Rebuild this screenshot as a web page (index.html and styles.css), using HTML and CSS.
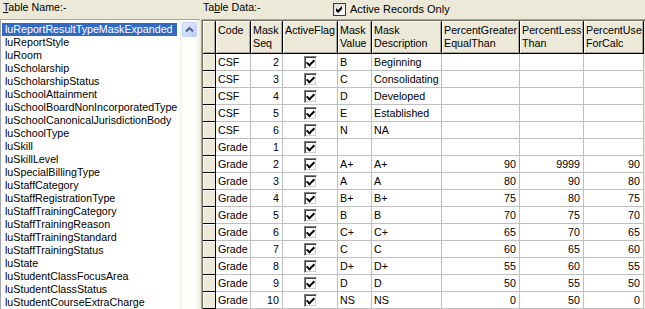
FILE: index.html
```html
<!DOCTYPE html>
<html>
<head>
<meta charset="utf-8">
<link rel="stylesheet" href="styles.css">
</head>
<body>
<div class="app">
  <section class="left">
    <div class="label"><u>T</u>able Name:-</div>
    <div class="listbox">
      <ul class="items">
        <li class="sel">luReportResultTypeMaskExpanded</li>
        <li>luReportStyle</li>
        <li>luRoom</li>
        <li>luScholarship</li>
        <li>luScholarshipStatus</li>
        <li>luSchoolAttainment</li>
        <li>luSchoolBoardNonIncorporatedType</li>
        <li>luSchoolCanonicalJurisdictionBody</li>
        <li>luSchoolType</li>
        <li>luSkill</li>
        <li>luSkillLevel</li>
        <li>luSpecialBillingType</li>
        <li>luStaffCategory</li>
        <li>luStaffRegistrationType</li>
        <li>luStaffTrainingCategory</li>
        <li>luStaffTrainingReason</li>
        <li>luStaffTrainingStandard</li>
        <li>luStaffTrainingStatus</li>
        <li>luState</li>
        <li>luStudentClassFocusArea</li>
        <li>luStudentClassStatus</li>
        <li>luStudentCourseExtraCharge</li>
      </ul>
      <div class="vscroll">
        <div class="sbtn"><svg width="13" height="13" viewBox="0 0 13 13"><path d="M3 8.5 L6.5 5 L10 8.5" fill="none" stroke="#4D6185" stroke-width="2"/></svg></div>
      </div>
    </div>
  </section>
  <section class="right">
    <div class="toolbar">
      <div class="label data-label">Ta<u>b</u>le Data:-</div>
      <div class="chk">
        <span class="xpbox"><svg width="11" height="11" viewBox="0 0 11 11"><polygon points="2,4 4,6 8,2 8,5 4,9 2,7" fill="#000"/></svg></span>
        <span>Active Records Only</span>
      </div>
    </div>
    <div class="grid">
      <div class="grid-inner">
        <table>
          <colgroup>
            <col class="c-rh"><col class="c-code"><col class="c-seq"><col class="c-act"><col class="c-val"><col class="c-desc"><col class="c-pge"><col class="c-plt"><col class="c-puc">
          </colgroup>
          <thead>
            <tr>
              <th class="rh"></th>
              <th>Code</th>
              <th>Mask<br>Seq</th>
              <th>ActiveFlag</th>
              <th>Mask<br>Value</th>
              <th>Mask<br>Description</th>
              <th>PercentGreater<br>EqualThan</th>
              <th>PercentLess<br>Than</th>
              <th>PercentUse<br>ForCalc</th>
            </tr>
          </thead>
          <tbody>
            <tr><td class="rh"></td><td>CSF</td><td class="num">2</td><td class="cb"><span class="gbox"></span></td><td>B</td><td>Beginning</td><td class="num"></td><td class="num"></td><td class="num"></td></tr>
            <tr><td class="rh"></td><td>CSF</td><td class="num">3</td><td class="cb"><span class="gbox"></span></td><td>C</td><td>Consolidating</td><td class="num"></td><td class="num"></td><td class="num"></td></tr>
            <tr><td class="rh"></td><td>CSF</td><td class="num">4</td><td class="cb"><span class="gbox"></span></td><td>D</td><td>Developed</td><td class="num"></td><td class="num"></td><td class="num"></td></tr>
            <tr><td class="rh"></td><td>CSF</td><td class="num">5</td><td class="cb"><span class="gbox"></span></td><td>E</td><td>Established</td><td class="num"></td><td class="num"></td><td class="num"></td></tr>
            <tr><td class="rh"></td><td>CSF</td><td class="num">6</td><td class="cb"><span class="gbox"></span></td><td>N</td><td>NA</td><td class="num"></td><td class="num"></td><td class="num"></td></tr>
            <tr><td class="rh"></td><td>Grade</td><td class="num">1</td><td class="cb"><span class="gbox"></span></td><td></td><td></td><td class="num"></td><td class="num"></td><td class="num"></td></tr>
            <tr><td class="rh"></td><td>Grade</td><td class="num">2</td><td class="cb"><span class="gbox"></span></td><td>A+</td><td>A+</td><td class="num">90</td><td class="num">9999</td><td class="num">90</td></tr>
            <tr><td class="rh"></td><td>Grade</td><td class="num">3</td><td class="cb"><span class="gbox"></span></td><td>A</td><td>A</td><td class="num">80</td><td class="num">90</td><td class="num">80</td></tr>
            <tr><td class="rh"></td><td>Grade</td><td class="num">4</td><td class="cb"><span class="gbox"></span></td><td>B+</td><td>B+</td><td class="num">75</td><td class="num">80</td><td class="num">75</td></tr>
            <tr><td class="rh"></td><td>Grade</td><td class="num">5</td><td class="cb"><span class="gbox"></span></td><td>B</td><td>B</td><td class="num">70</td><td class="num">75</td><td class="num">70</td></tr>
            <tr><td class="rh"></td><td>Grade</td><td class="num">6</td><td class="cb"><span class="gbox"></span></td><td>C+</td><td>C+</td><td class="num">65</td><td class="num">70</td><td class="num">65</td></tr>
            <tr><td class="rh"></td><td>Grade</td><td class="num">7</td><td class="cb"><span class="gbox"></span></td><td>C</td><td>C</td><td class="num">60</td><td class="num">65</td><td class="num">60</td></tr>
            <tr><td class="rh"></td><td>Grade</td><td class="num">8</td><td class="cb"><span class="gbox"></span></td><td>D+</td><td>D+</td><td class="num">55</td><td class="num">60</td><td class="num">55</td></tr>
            <tr><td class="rh"></td><td>Grade</td><td class="num">9</td><td class="cb"><span class="gbox"></span></td><td>D</td><td>D</td><td class="num">50</td><td class="num">55</td><td class="num">50</td></tr>
            <tr><td class="rh"></td><td>Grade</td><td class="num">10</td><td class="cb"><span class="gbox"></span></td><td>NS</td><td>NS</td><td class="num">0</td><td class="num">50</td><td class="num">0</td></tr>
          </tbody>
        </table>
      </div>
    </div>
  </section>
</div>
</body>
</html>
```

FILE: styles.css
```css
* { box-sizing: border-box; }

html, body {
  margin: 0;
  padding: 0;
  height: 100%;
  overflow: hidden;
  background: #ECE9D8;
  font-family: "Liberation Sans", Arial, sans-serif;
  font-size: 10.7px;
  color: #000;
}

.app {
  display: flex;
  height: 309px;
}

/* ---------- left panel ---------- */
.left {
  width: 200px;
  flex: none;
  display: flex;
  flex-direction: column;
}

.label {
  height: 19px;
  padding: 1px 0 0 3px;
  line-height: 13px;
  white-space: nowrap;
}

.label u { text-decoration: underline; text-underline-offset: 1px; }

.listbox {
  flex: 1;
  min-height: 0;
  display: flex;
  background: #fff;
  border-top: 1px solid #A5A5A5;
  border-left: 1px solid #A5A5A5;
  overflow: hidden;
}

.items {
  list-style: none;
  margin: 0;
  padding: 3px 0 0 1px;
  width: 179px;
  flex: none;
  overflow: hidden;
}

.items li {
  width: 178px;
  height: 13px;
  line-height: 13px;
  padding-left: 3px;
  white-space: nowrap;
}

.items li.sel {
  width: 175px;
  overflow: hidden;
  background: #316AC5;
  color: #fff;
}

.vscroll {
  width: 20px;
  flex: none;
  background: linear-gradient(to right, #F1EFE6 0, #FDFDFA 3px, #FDFDFA 15px, #EFEDE4 20px);
  padding: 2px 3px 0 2px;
}

.sbtn {
  width: 15px;
  height: 15px;
  border: 1px solid #C3D2F6;
  border-radius: 2px;
  background: linear-gradient(to bottom right, #E6EEFE, #BACDF8);
  display: flex;
  align-items: center;
  justify-content: center;
}

.sbtn svg { display: block; }

/* ---------- right panel ---------- */
.right {
  flex: 1;
  min-width: 0;
  display: flex;
  flex-direction: column;
  padding-left: 1px;
}

.toolbar {
  display: flex;
  align-items: flex-start;
  height: 19px;
  flex: none;
}

.data-label {
  width: 132px;
  padding-left: 2px;
}

.chk {
  margin-top: 3px;
  display: flex;
  align-items: center;
  gap: 4px;
  line-height: 13px;
  white-space: nowrap;
  font-size: 11px;
}

.xpbox {
  width: 13px;
  height: 13px;
  border: 1px solid #3A3A3A;
  background: linear-gradient(to bottom right, #DCDAD2, #FFFFFF);
  display: flex;
  align-items: center;
  justify-content: center;
}

.xpbox svg { display: block; }

.grid {
  flex: 1;
  min-height: 0;
  overflow: hidden;
  border-top: 1px solid #ACA899;
  border-left: 1px solid #ACA899;
}

.grid-inner {
  height: 100%;
  border-top: 1px solid #716F64;
  border-left: 1px solid #716F64;
  overflow: hidden;
}

table {
  border-collapse: separate;
  border-spacing: 0;
  table-layout: fixed;
  width: 441px;
}

col.c-rh { width: 13px; }
col.c-code { width: 35px; }
col.c-seq { width: 32px; }
col.c-act { width: 55px; }
col.c-val { width: 34px; }
col.c-desc { width: 70px; }
col.c-pge { width: 78px; }
col.c-plt { width: 64px; }
col.c-puc { width: 60px; }

th {
  height: 33px;
  padding: 3px 1px 0 2px;
  background: #ECE9D8;
  border-right: 1px solid #000;
  border-bottom: 1px solid #000;
  box-shadow: inset 1px 1px 0 #fff, inset -1px -1px 0 #ACA899;
  font-weight: normal;
  text-align: left;
  vertical-align: top;
  line-height: 13px;
  white-space: nowrap;
  overflow: hidden;
}

td {
  height: 17px;
  padding: 0 2px;
  background: #fff;
  border-right: 1px solid #C0C0C0;
  border-bottom: 1px solid #C0C0C0;
  line-height: 16px;
  white-space: nowrap;
  overflow: hidden;
}

td.rh {
  background: #ECE9D8;
  border-right: 1px solid #000;
  border-bottom: 1px solid #000;
  box-shadow: inset 1px 1px 0 #fff;
}

td.num { text-align: right; padding-right: 3px; }

td.cb { padding: 0; }

.gbox {
  display: block;
  margin: 0 auto;
  width: 13px;
  height: 13px;
  border-top: 1px solid #808080;
  border-left: 1px solid #808080;
  border-right: 1px solid #fff;
  border-bottom: 1px solid #fff;
  box-shadow: inset 1px 1px 0 #404040, inset -1px -1px 0 #D4D0C8;
  background: #fff;
  position: relative;
}

.gbox::after {
  content: "";
  position: absolute;
  left: 2px;
  top: 1px;
  width: 3px;
  height: 6px;
  border-right: 2px solid #000;
  border-bottom: 2px solid #000;
  transform: translate(1px, 0) rotate(45deg);
  transform-origin: center;
}
```
